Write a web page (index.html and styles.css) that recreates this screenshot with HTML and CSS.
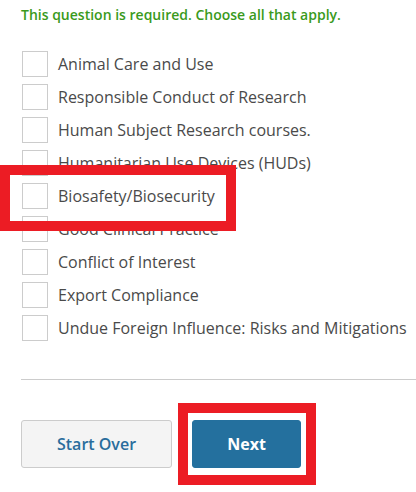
FILE: index.html
```html
<!DOCTYPE html>
<html>
<head>
<meta charset="utf-8">
<link rel="stylesheet" href="styles.css">
</head>
<body>
<div class="page">
  <p class="req">This question is required. Choose all that apply.</p>
  <ul class="opts">
    <li class="opt"><span class="box"></span><span class="lbl">Animal Care and Use</span></li>
    <li class="opt"><span class="box"></span><span class="lbl">Responsible Conduct of Research</span></li>
    <li class="opt"><span class="box"></span><span class="lbl">Human Subject Research courses.</span></li>
    <li class="opt"><span class="box"></span><span class="lbl">Humanitarian Use Devices (HUDs)</span></li>
    <li class="opt"><span class="box"></span><span class="lbl">Biosafety/Biosecurity</span></li>
    <li class="opt"><span class="box"></span><span class="lbl">Good Clinical Practice</span></li>
    <li class="opt"><span class="box"></span><span class="lbl">Conflict of Interest</span></li>
    <li class="opt"><span class="box"></span><span class="lbl">Export Compliance</span></li>
    <li class="opt"><span class="box"></span><span class="lbl">Undue Foreign Influence: Risks and Mitigations</span></li>
  </ul>
  <hr class="divider">
  <div class="actions">
    <button class="btn btn-secondary">Start Over</button>
    <button class="btn btn-primary">Next</button>
  </div>
  <div class="mark mark-bio"></div>
  <div class="mark mark-next"></div>
</div>
</body>
</html>
```
FILE: styles.css
```css
html, body {
  margin: 0;
  padding: 0;
  background: #ffffff;
}
.page {
  position: relative;
  width: 416px;
  height: 492px;
  overflow: hidden;
  font-family: "Open Sans", "Noto Sans", sans-serif;
  padding-left: 21px;
  box-sizing: border-box;
}
.req {
  margin: 0;
  padding-top: 5px;
  font-size: 14px;
  font-weight: 600;
  line-height: 20px;
  color: #3a9a1c;
}
.opts {
  list-style: none;
  margin: 26px 0 0 0;
  padding: 0 0 0 1px;
  display: flex;
  flex-direction: column;
  gap: 7px;
}
.opt {
  display: flex;
  align-items: center;
  gap: 10px;
  height: 26px;
}
.box {
  width: 26px;
  height: 26px;
  box-sizing: border-box;
  border: 1px solid #cccccc;
  background: #fff;
  flex: none;
}
.lbl {
  font-size: 16px;
  color: #4a4a4a;
  white-space: nowrap;
}
.divider {
  margin: 38px 0 0 0;
  border: 0;
  border-top: 1px solid #cccccc;
  height: 0;
}
.actions {
  display: flex;
  gap: 20px;
  margin-top: 40px;
}
.btn {
  height: 48px;
  border-radius: 3px;
  font-family: "Open Sans", "Noto Sans", sans-serif;
  font-size: 16px;
  font-weight: 600;
  cursor: pointer;
}
.btn-secondary {
  width: 151px;
  background: #f4f4f4;
  border: 1px solid #cccccc;
  color: #2a6d9c;
}
.btn-primary {
  width: 109px;
  background: #24709e;
  border: 1px solid #24709e;
  color: #ffffff;
  font-weight: 700;
}
.mark {
  position: absolute;
  border: 10px solid #ec1c24;
  box-sizing: border-box;
}
.mark-bio {
  left: 0;
  top: 165px;
  width: 236px;
  height: 66px;
}
.mark-next {
  left: 178px;
  top: 403px;
  width: 138px;
  height: 82px;
}
```
